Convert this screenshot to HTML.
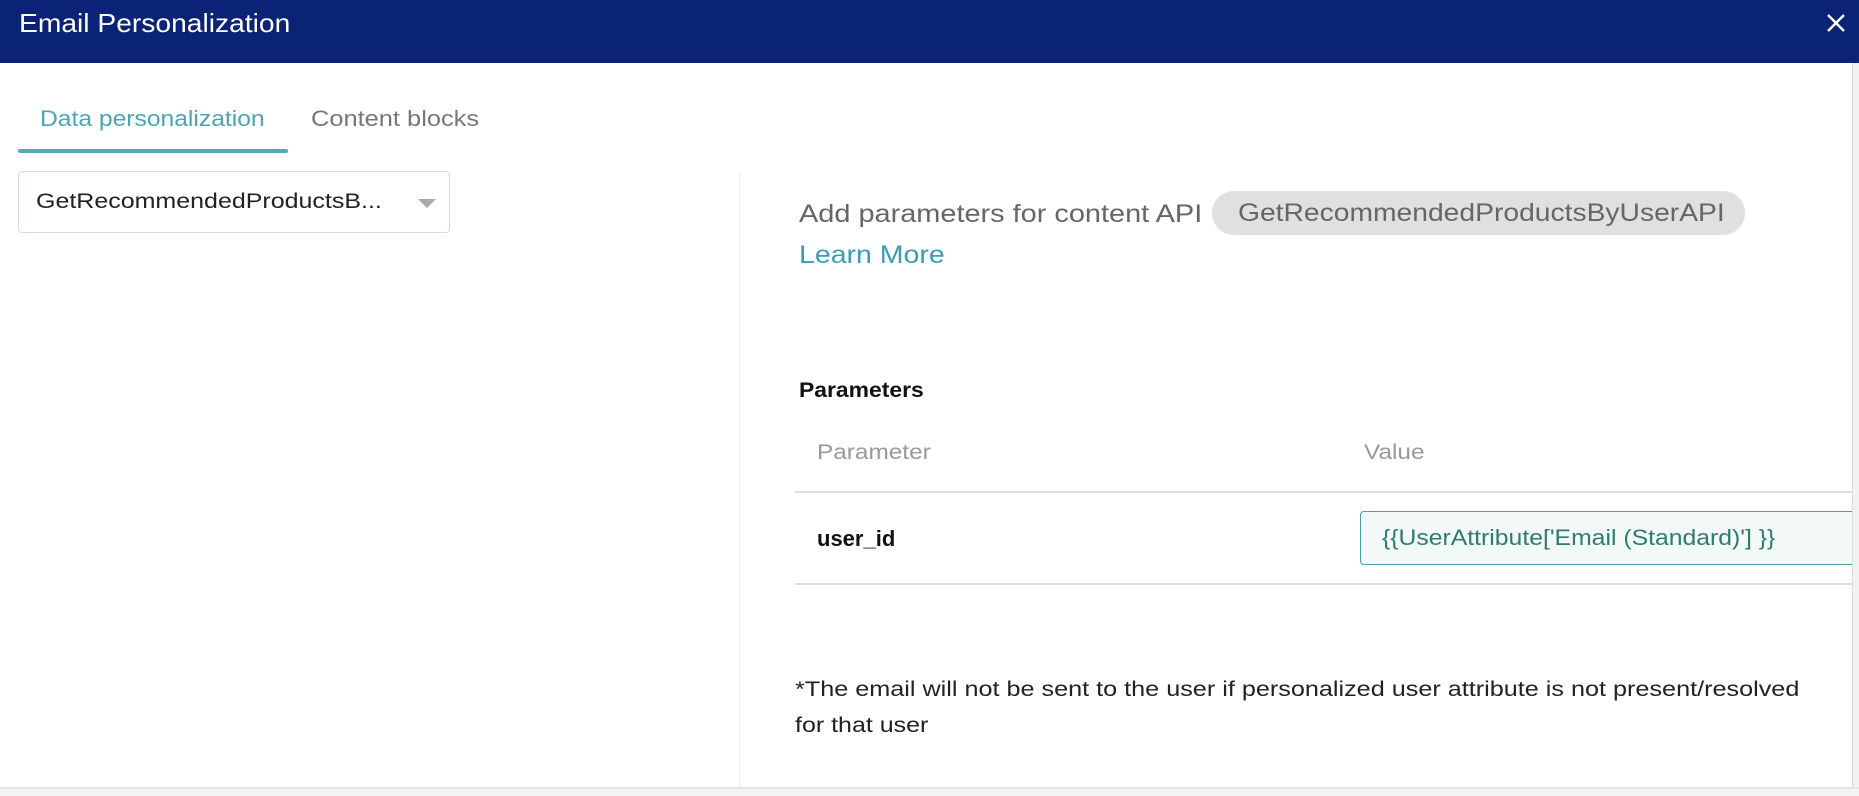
<!DOCTYPE html>
<html><head><meta charset="utf-8"><style>
*{margin:0;padding:0;box-sizing:border-box}
body{width:1859px;height:796px;overflow:hidden;background:#fff;font-family:"Liberation Sans",sans-serif;position:relative}
.a{position:absolute;white-space:nowrap;transform-origin:0 50%}
</style></head><body>
<div class="a" style="left:0;top:0;width:1859px;height:63px;background:#0b2377"></div>
<div class="a" style="left:19px;top:7px;font-size:26px;color:#fff;line-height:32px;transform:scaleX(1.085)">Email Personalization</div>
<svg class="a" style="left:1826px;top:13px" width="20" height="20" viewBox="0 0 20 20"><path d="M2 2L18 18M18 2L2 18" stroke="#fff" stroke-width="2.4"/></svg>
<div class="a" style="left:40px;top:106px;font-size:22px;color:#4aa6b5;transform:scaleX(1.12)">Data personalization</div>
<div class="a" style="left:311px;top:106px;font-size:22px;color:#777;transform:scaleX(1.155)">Content blocks</div>
<div class="a" style="left:18px;top:149px;width:270px;height:4px;border-radius:2px;background:#52a9b8"></div>
<div class="a" style="left:18px;top:171px;width:432px;height:62px;border:1px solid #d6dbe6;border-radius:4px"></div>
<div class="a" style="left:36px;top:190px;font-size:21px;color:#222;transform:scaleX(1.19)">GetRecommendedProductsB...</div>
<div class="a" style="left:418px;top:199px;width:0;height:0;border-left:9px solid transparent;border-right:9px solid transparent;border-top:9px solid #aaa"></div>
<div class="a" style="left:739px;top:172px;width:1px;height:616px;background:#eee"></div>
<div class="a" style="left:799px;top:200px;font-size:25px;color:#666;transform:scaleX(1.156)">Add parameters for content API</div>
<div class="a" style="left:1212px;top:191px;width:533px;height:44px;border-radius:22px;background:#e0e0e0"></div>
<div class="a" style="left:1238px;top:191px;font-size:25px;color:#666;line-height:44px;transform:scaleX(1.13)">GetRecommendedProductsByUserAPI</div>
<div class="a" style="left:799px;top:241px;font-size:25px;color:#3b9db5;transform:scaleX(1.14)">Learn More</div>
<div class="a" style="left:799px;top:379px;font-size:21px;color:#111;font-weight:bold;transform:scaleX(1.09)">Parameters</div>
<div class="a" style="left:817px;top:441px;font-size:21px;color:#999;transform:scaleX(1.16)">Parameter</div>
<div class="a" style="left:1364px;top:441px;font-size:21px;color:#999;transform:scaleX(1.16)">Value</div>
<div class="a" style="left:795px;top:491px;width:1057px;height:2px;background:#ddd"></div>
<div class="a" style="left:817px;top:526px;font-size:22px;color:#111;font-weight:bold;transform:scaleX(1.0)">user_id</div>
<div class="a" style="left:1360px;top:511px;width:500px;height:54px;border:1px solid #4a9fa8;border-radius:4px;background:#f2f9f8"></div>
<div class="a" style="left:1382px;top:525px;font-size:22px;color:#2f7d68;transform:scaleX(1.125)">{{UserAttribute['Email (Standard)'] }}</div>
<div class="a" style="left:795px;top:583px;width:1057px;height:2px;background:#ddd"></div>
<div class="a" style="left:795px;top:678px;font-size:21px;color:#222;transform:scaleX(1.2)">*The email will not be sent to the user if personalized user attribute is not present/resolved</div>
<div class="a" style="left:795px;top:714px;font-size:21px;color:#222;transform:scaleX(1.19)">for that user</div>
<div class="a" style="left:0;top:787px;width:1859px;height:9px;background:#f3f3f3;border-top:2px solid #e4e4e4"></div>
<div class="a" style="left:1852px;top:63px;width:7px;height:724px;background:#f1f1f1;border-left:1px solid #ddd"></div>
</body></html>
